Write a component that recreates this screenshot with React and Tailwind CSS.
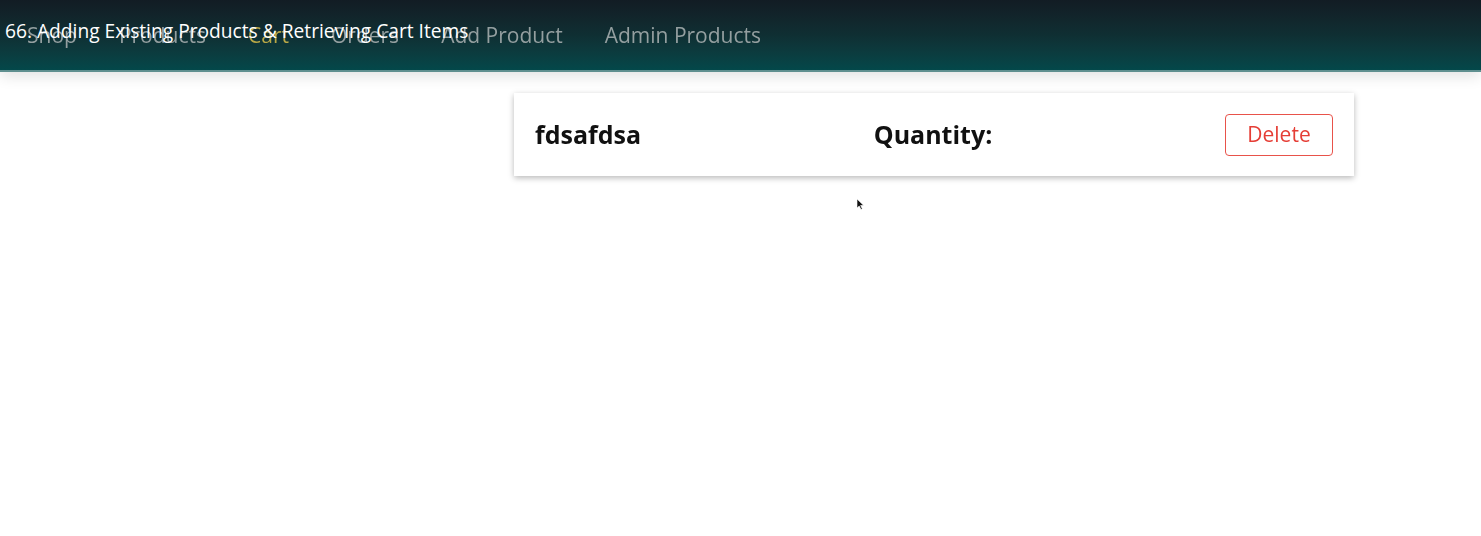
import React from 'react';

const navItems = [
  { label: 'Shop', active: false },
  { label: 'Products', active: false },
  { label: 'Cart', active: true },
  { label: 'Orders', active: false },
  { label: 'Add Product', active: false },
  { label: 'Admin Products', active: false },
];

const cartItems = [{ id: 1, title: 'fdsafdsa' }];

export default function App() {
  return (
    <div className="relative w-[1481px] h-[536px] overflow-hidden bg-white font-['Open_Sans',sans-serif]">
      {/* Header */}
      <header className="relative h-[72px] bg-gradient-to-b from-[#121c24] via-[#0f2f33] to-[#03484a] border-b-2 border-[#5f8f8f] shadow-[0_4px_14px_rgba(0,0,0,0.12)]">
        <nav className="h-full flex items-center pl-[27px] gap-[42px] pt-[2px]">
          {navItems.map((item) => (
            <span
              key={item.label}
              className={`text-[21px] blur-[0.6px] ${item.active ? 'text-[#b8a746]' : 'text-[#949fa0]'}`}
            >
              {item.label}
            </span>
          ))}
        </nav>
        {/* Video title overlay */}
        <div className="absolute left-[5px] top-[17px] text-[19.2px] leading-[28px] text-white">
          66. Adding Existing Products &amp; Retrieving Cart Items
        </div>
      </header>

      {/* Cart list */}
      <main className="pt-[21px] pl-[514px]">
        <ul className="w-[840px]">
          {cartItems.map((item) => (
            <li
              key={item.id}
              className="flex items-center justify-between h-[83px] px-[21px] bg-white shadow-[0_2px_6px_rgba(0,0,0,0.28)]"
            >
              <h1 className="text-[25px] font-bold text-[#111] blur-[0.4px]">{item.title}</h1>
              <h2 className="text-[25px] font-bold text-[#111] blur-[0.4px]">Quantity:</h2>
              <button className="w-[108px] h-[42px] border border-[#e8524a] rounded-[4px] text-[21px] text-[#e53e36] blur-[0.3px]">
                Delete
              </button>
            </li>
          ))}
        </ul>
      </main>

      {/* Mouse cursor */}
      <svg className="absolute left-[856px] top-[198px]" width="8" height="12" viewBox="0 0 8 12">
        <path d="M1 1 L1 10 L3.2 8 L5 11.5 L6.3 10.8 L4.6 7.5 L7.5 7.3 Z" fill="#111" stroke="#fff" strokeWidth="0.6" />
      </svg>
    </div>
  );
}
